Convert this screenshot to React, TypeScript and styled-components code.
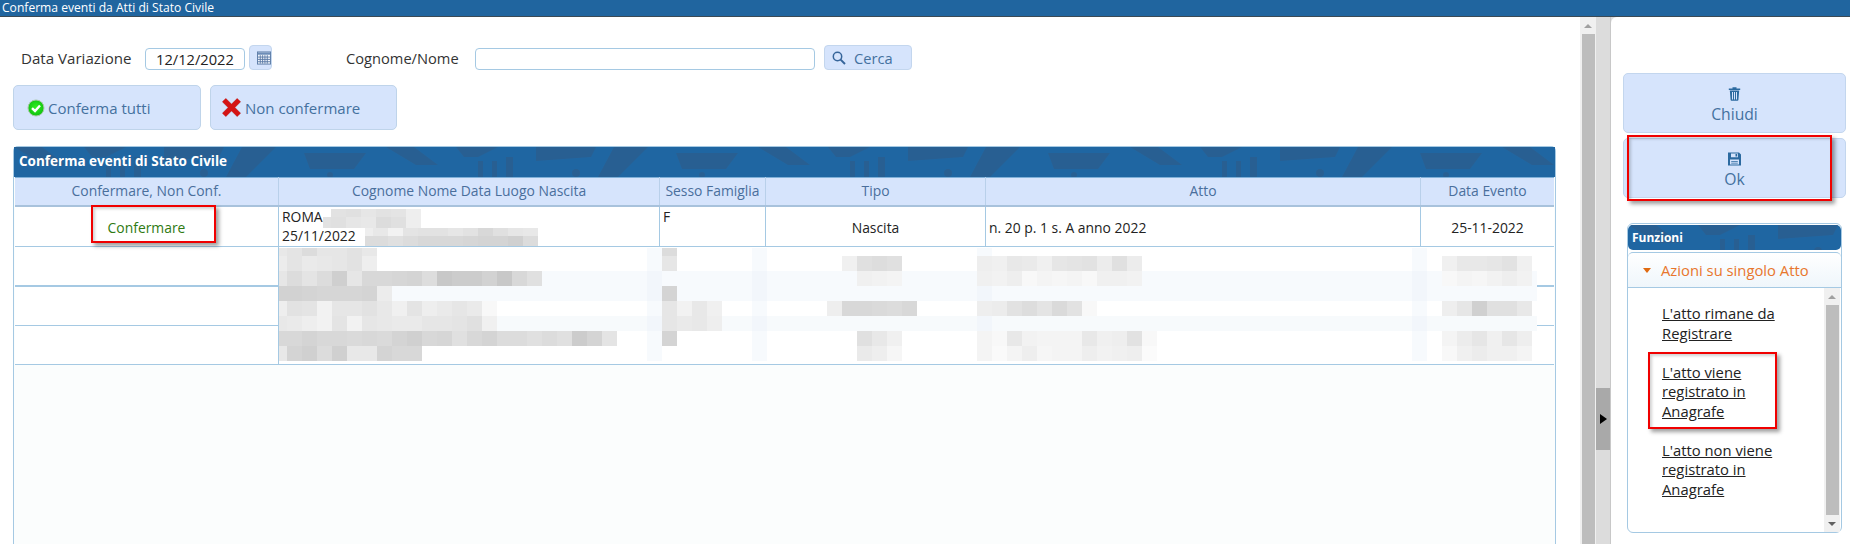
import React from 'react';
import styled, { createGlobalStyle } from 'styled-components';

const GlobalStyle = createGlobalStyle`
  html, body {
    margin: 0;
    padding: 0;
    height: 100%;
    overflow: hidden;
    background: #fff;
    font-family: 'Open Sans', 'Liberation Sans', sans-serif;
  }
  * { box-sizing: border-box; }
`;

const COLUMNS = '264px 381px 106px 220px 435px 133px';
const LINE = '#a5c9e3';

const Page = styled.div`
  width: 1850px;
  height: 544px;
  display: flex;
  flex-direction: column;
  overflow: hidden;
`;

const TitleBar = styled.div`
  height: 17px;
  flex: none;
  background: #20659f;
  border-bottom: 1px solid #3b4a55;
  color: #fff;
  font-size: 12.1px;
  line-height: 16px;
  padding-left: 2px;
`;

const Workspace = styled.div`
  flex: 1;
  min-height: 0;
  display: flex;
  background: #dcdcdc;
`;

const MainPane = styled.div`
  width: 1580px;
  flex: none;
  background: #fff;
  padding: 28px 0 0 13px;
  display: flex;
  flex-direction: column;
`;

const FilterRow = styled.div`
  height: 25px;
  display: flex;
  align-items: center;
  padding-left: 8px;
`;

const Label = styled.span<{ $width: number; $size: number }>`
  width: ${p => p.$width}px;
  flex: none;
  font-size: ${p => p.$size}px;
  color: #333;
`;

const TextInput = styled.div<{ $width: number }>`
  width: ${p => p.$width}px;
  height: 22px;
  margin-top: 3px;
  flex: none;
  border: 1px solid ${LINE};
  border-radius: 4px;
  background: #fff;
  color: #222;
  font-size: 14.67px;
  line-height: 20px;
  text-align: center;
`;

const SmallButton = styled.div<{ $width: number; $gap: number; $after: number }>`
  width: ${p => p.$width}px;
  height: 25px;
  flex: none;
  margin-left: ${p => p.$gap}px;
  margin-right: ${p => p.$after}px;
  display: flex;
  align-items: center;
  gap: 8px;
  padding-left: 7px;
  background: #d6e4fc;
  border: 1px solid #c3d6ee;
  border-radius: 4px;
  color: #44719f;
  font-size: 14.67px;
`;

const ActionRow = styled.div`
  display: flex;
  gap: 9px;
  margin-top: 15px;
`;

const ActionButton = styled.div<{ $width: number; $pad: number }>`
  width: ${p => p.$width}px;
  height: 45px;
  display: flex;
  align-items: center;
  gap: 3px;
  padding-left: ${p => p.$pad}px;
  background: #d6e4fc;
  border: 1px solid #bfd4ea;
  border-radius: 5px;
  color: #44719f;
  font-size: 15px;
`;

const TablePanel = styled.div`
  margin-top: 16px;
  width: 1543px;
  flex: 1;
  min-height: 0;
  background: #fbfdfd;
  border: 1px solid ${LINE};
  border-bottom: none;
  border-radius: 5px 5px 0 0;
`;

const TextureBar = styled.div<{ $height: number }>`
  position: relative;
  height: ${p => p.$height}px;
  background: #1f66a2;
  overflow: hidden;
`;

const TextureArt = styled.svg`
  position: absolute;
  inset: 0;
  width: 100%;
  height: 100%;
`;

const BarText = styled.span<{ $size: number; $left: number; $line: number }>`
  position: relative;
  display: block;
  padding-left: ${p => p.$left}px;
  color: #fff;
  font-size: ${p => p.$size}px;
  font-weight: 700;
  line-height: ${p => p.$line}px;
`;

const TableBody = styled.div`
  margin: 0 1px;
  width: 1539px;
  position: relative;
`;

const HeadRow = styled.div`
  display: grid;
  grid-template-columns: ${COLUMNS};
  height: 30px;
  background: #d6e4fc;
  border-bottom: 2px solid #a8c2dc;
  box-shadow: inset 0 1px 0 #7fb0d8;
`;

const HeadCell = styled.div`
  border-right: 1px solid #b9d0ea;
  color: #4a6f9c;
  font-size: 13.9px;
  line-height: 27px;
  text-align: center;
  white-space: nowrap;
  &:last-child { border-right: none; }
`;

const Row = styled.div<{ $height: number; $border: number }>`
  display: grid;
  grid-template-columns: ${COLUMNS};
  height: ${p => p.$height}px;
  background: #fff;
  border-bottom: ${p => p.$border}px solid ${LINE};
`;

const EmptyRow = styled(Row)`
  grid-template-columns: 264px 1fr;
`;

const Cell = styled.div<{ $align?: string; $middle?: boolean }>`
  position: relative;
  border-right: 1px solid ${LINE};
  padding: ${p => (p.$middle ? '2px 0 0' : '0 3px')};
  color: #222;
  font-size: 13.9px;
  line-height: 19px;
  text-align: ${p => p.$align || 'left'};
  display: ${p => (p.$middle ? 'flex' : 'block')};
  align-items: center;
  justify-content: ${p => (p.$align === 'center' ? 'center' : 'flex-start')};
  &:last-child { border-right: none; }
`;

const AttoCell = styled(Cell)`
  padding-left: 3px;
`;

const ConfirmText = styled.span`
  color: #2f7a12;
`;

const RedBox = styled.div<{ $left: number; $top: number; $width: number; $height: number }>`
  position: absolute;
  left: ${p => p.$left}px;
  top: ${p => p.$top}px;
  width: ${p => p.$width}px;
  height: ${p => p.$height}px;
  border: 2px solid #f00000;
  box-shadow: 3px 3px 4px rgba(0, 0, 0, 0.38), inset 2px 2px 3px rgba(0, 0, 0, 0.18);
  pointer-events: none;
`;

const MosaicGrid = styled.div<{ $left: number; $top: number; $columns: string; $rows: string }>`
  position: absolute;
  left: ${p => p.$left}px;
  top: ${p => p.$top}px;
  display: grid;
  grid-template-columns: ${p => p.$columns};
  grid-template-rows: ${p => p.$rows};
`;

const MosaicCell = styled.div<{ $color: string }>`
  background: ${p => p.$color};
`;

const Scrollbar = styled.div`
  width: 16px;
  flex: none;
  display: flex;
  flex-direction: column;
  align-items: center;
  background: #f0f0f0;
`;

const ScrollArrow = styled.div<{ $down?: boolean }>`
  flex: none;
  height: 17px;
  display: flex;
  align-items: center;
  justify-content: center;
  &::after {
    content: '';
    border-left: 4px solid transparent;
    border-right: 4px solid transparent;
    ${p => (p.$down ? 'border-top: 4px solid #606060;' : 'border-bottom: 4px solid #a0a0a0;')}
  }
`;

const ScrollThumb = styled.div`
  flex: 1;
  width: 13px;
  background: #bdbdbd;
`;

const Splitter = styled.div`
  width: 15px;
  flex: none;
  padding-top: 371px;
  background: #dcdcdc;
  border-right: 1px solid #c8c8c8;
`;

const SplitHandle = styled.div`
  width: 14px;
  height: 62px;
  background: #a9a9a9;
  display: flex;
  align-items: center;
  justify-content: center;
  &::after {
    content: '';
    border-top: 5px solid transparent;
    border-bottom: 5px solid transparent;
    border-left: 7px solid #000;
  }
`;

const SidePanel = styled.div`
  flex: 1;
  background: #fff;
  border-radius: 6px 0 0 0;
  padding: 56px 0 0 12px;
`;

const SideButton = styled.div`
  position: relative;
  width: 223px;
  height: 60px;
  margin-bottom: 5px;
  padding-top: 13px;
  display: flex;
  flex-direction: column;
  align-items: center;
  gap: 3px;
  background: #d6e4fc;
  border: 1px solid #c3d6ee;
  border-radius: 5px;
  color: #44719f;
  font-size: 15.7px;
  line-height: 20px;
`;

const FunctionsPanel = styled.div`
  width: 215px;
  height: 310px;
  margin: 25px 0 0 4px;
  border: 1px solid ${LINE};
  border-radius: 6px;
  padding: 1px 0 0;
  display: flex;
  flex-direction: column;
`;

const FunctionsHead = styled.div`
  flex: none;
  border-radius: 5px;
  overflow: hidden;
  margin-bottom: 2px;
`;

const AccordionHead = styled.div`
  height: 36px;
  flex: none;
  display: flex;
  align-items: center;
  gap: 10px;
  padding-left: 15px;
  background: linear-gradient(#ffffff, #eff6fb);
  border: 1px solid ${LINE};
  border-width: 1px 0;
  border-radius: 5px 5px 0 0;
  color: #e8762c;
  font-size: 14.8px;
  &::before {
    content: '';
    border-left: 4px solid transparent;
    border-right: 4px solid transparent;
    border-top: 5px solid #e06a10;
  }
`;

const AccordionBody = styled.div`
  flex: 1;
  min-height: 0;
  display: flex;
`;

const LinkList = styled.div`
  flex: 1;
  padding: 16px 0 0 34px;
  display: flex;
  flex-direction: column;
  gap: 19.5px;
`;

const LinkItem = styled.a`
  position: relative;
  display: block;
  width: 125px;
  color: #222;
  font-size: 14.8px;
  line-height: 19.5px;
  text-decoration: underline;
`;

const SideScroll = styled(Scrollbar)`
  margin-right: 1px;
`;

const TexturedBar = ({ id, height, children }: { id: string; height: number; children: React.ReactNode }) => (
  <TextureBar $height={height}>
    <TextureArt aria-hidden="true">
      <defs>
        <pattern id={id} width="372" height="31" patternUnits="userSpaceOnUse">
          <g fill="#285f92">
            <polygon points="0,0 28,0 52,18 30,18" />
            <polygon points="70,0 112,0 92,10 78,10" />
            <rect x="92" y="14" width="5" height="17" />
            <rect x="106" y="14" width="5" height="17" />
            <rect x="120" y="10" width="7" height="21" />
            <polygon points="150,0 210,0 205,10 150,14" />
            <circle cx="190" cy="26" r="4" />
            <polygon points="228,0 262,0 232,30 212,30" />
            <polygon points="290,6 352,6 340,22 296,22" />
            <circle cx="316" cy="28" r="3" />
          </g>
        </pattern>
      </defs>
      <rect width="100%" height="100%" fill={`url(#${id})`} />
    </TextureArt>
    {children}
  </TextureBar>
);

const hex = (v: string) => `#${v}${v}${v}`;

type Run = [number, string[]];
type Band = { height: number; tint?: string; runs: Run[] };

const RECORD_BANDS: Band[] = [
  { height: 8, runs: [[0, ['e8', 'e4', 'dc', 'e6', 'e6', 'e2', 'e8']], [26, ['dc']]] },
  {
    height: 15,
    runs: [
      [0, ['ec', 'e4', 'ea', 'e8', 'e6', 'e2', 'ee']],
      [26, ['e6']],
      [38, ['f0', 'e0', 'dd', 'e0']],
      [47, ['ee', 'f0', 'e8', 'ea', 'f0', 'e6', 'e4', 'e2', 'ec', 'e0', 'ec']],
      [78, ['f0', 'e8', 'e8', 'e6', 'e2', 'f0']],
    ],
  },
  {
    height: 15,
    tint: 'f7fafd',
    runs: [
      [0, ['e6', 'dc', 'e4', 'dc', 'cf', 'e6', 'd8', 'd8', 'd6', 'd4', 'dd', 'c8', 'cc', 'cc', 'd2', 'c8', 'd8', 'e0']],
      [39, ['f0', 'f2', 'f4']],
      [47, ['f0', 'f2', 'ee', 'f8', 'f4', 'f6', 'f4', 'f8', 'f0', 'f0', 'f2']],
      [78, ['f8', 'f4', 'f6', 'f2', 'ee', 'f2']],
    ],
  },
  {
    height: 15,
    tint: 'f7fafd',
    runs: [[0, ['d2', 'd2', 'd4', 'd6', 'd6', 'd6', 'd4', 'ec']], [26, ['d4']]],
  },
  {
    height: 15,
    runs: [
      [0, ['ee', 'e2', 'e4', 'f2', 'e6', 'e6', 'e2', 'e8', 'f0', 'e4', 'ee', 'ea', 'e6', 'ea', 'f8']],
      [26, ['e6', 'f2', 'e8', 'f0']],
      [37, ['ee', 'd8', 'd8', 'da', 'dc', 'd8']],
      [47, ['ee', 'ec', 'e2', 'dd', 'e4', 'da', 'e2', 'f8']],
      [78, ['ee', 'e6', 'd0', 'e0', 'e0', 'e8']],
    ],
  },
  {
    height: 15,
    tint: 'f7fafc',
    runs: [
      [0, ['e8', 'ea', 'ee', 'f2', 'e4', 'f2', 'e6', 'e8', 'ea', 'ea', 'e6', 'e6', 'e4', 'e0', 'f0']],
      [26, ['e6', 'ea', 'e8', 'ee']],
    ],
  },
  {
    height: 15,
    runs: [
      [0, ['d8', 'd8', 'd4', 'd8', 'd8', 'da', 'd8', 'da', 'd4', 'd0', 'd8', 'd6', 'e0', 'd8', 'd4', 'dc', 'dc', 'e0', 'dc', 'e0', 'cc', 'd4', 'e4']],
      [26, ['d4']],
      [39, ['e0', 'e8', 'f0']],
      [47, ['f4', 'f8', 'e8', 'f2', 'f4', 'f4', 'f4', 'e8', 'f0', 'ee', 'e2', 'f8']],
      [78, ['f4', 'ec', 'e6', 'f0', 'e6', 'ee']],
    ],
  },
  {
    height: 15,
    runs: [
      [0, ['e8', 'd4', 'd0', 'dc', 'd0', 'e8', 'e8', 'd4', 'd8', 'd8']],
      [39, ['ea', 'ee', 'f6']],
      [47, ['f4', 'fa', 'f4', 'ee', 'f6', 'f4', 'f4', 'ee', 'f2', 'f0', 'ee', 'fb']],
      [78, ['f8', 'f0', 'ec', 'f0', 'f0', 'f4']],
    ],
  },
];

const TINT_COLUMNS = [25, 32, 47, 76];
const RECORD_COLUMNS = 85;

const RecordMosaic = () => {
  const cells: React.ReactNode[] = [];
  RECORD_BANDS.forEach((band, b) => {
    for (let k = 0; k < RECORD_COLUMNS; k++) {
      let color = band.tint ? `#${band.tint}` : '#ffffff';
      if (TINT_COLUMNS.includes(k)) color = band.tint ? '#f2f6fb' : '#f7fafd';
      for (const [start, shades] of band.runs) {
        if (k >= start && k < start + shades.length) color = hex(shades[k - start]);
      }
      cells.push(<MosaicCell key={`${b}-${k}`} $color={color} />);
    }
  });
  return (
    <MosaicGrid
      $left={264}
      $top={71}
      $columns="8px repeat(83, 15px) 5px"
      $rows={RECORD_BANDS.map(b => `${b.height}px`).join(' ')}
    >
      {cells}
    </MosaicGrid>
  );
};

const SmallMosaic = ({ left, top, columns, rows, shades }: { left: number; top: number; columns: string; rows: string; shades: string[] }) => (
  <MosaicGrid $left={left} $top={top} $columns={columns} $rows={rows}>
    {shades.map((s, i) => (
      <MosaicCell key={i} $color={hex(s)} />
    ))}
  </MosaicGrid>
);

const CheckIcon = () => (
  <svg width="18" height="18" viewBox="0 0 18 18">
    <defs>
      <radialGradient id="okGreen" cx="50%" cy="45%" r="55%">
        <stop offset="0%" stopColor="#30f020" />
        <stop offset="100%" stopColor="#10c010" />
      </radialGradient>
    </defs>
    <circle cx="9" cy="9" r="8" fill="url(#okGreen)" stroke="#a8c8a8" strokeWidth="1" />
    <path d="M5 9.2 L8 12 L13 6.5" fill="none" stroke="#fff" strokeWidth="2.4" />
  </svg>
);

const CrossIcon = () => (
  <svg width="21" height="21" viewBox="0 0 21 21">
    <path d="M3 3 L18 18 M18 3 L3 18" stroke="#8c8c8c" strokeWidth="6" opacity="0.35" />
    <path d="M3 3 L18 18 M18 3 L3 18" stroke="#d41414" strokeWidth="5" />
  </svg>
);

const CalendarIcon = () => (
  <svg width="15" height="14" viewBox="0 0 15 14">
    <rect x="0.5" y="0.5" width="14" height="13" fill="#f2f6fc" stroke="#5b7ba6" />
    <rect x="1" y="1" width="13" height="2.5" fill="#6d8db8" />
    <path d="M1 6 H14 M1 8.5 H14 M1 11 H14 M3.5 4 V13 M6 4 V13 M8.5 4 V13 M11 4 V13" stroke="#5b7ba6" strokeWidth="1" />
  </svg>
);

const SearchIcon = () => (
  <svg width="14" height="14" viewBox="0 0 14 14" fill="none" stroke="#36659a">
    <circle cx="5.5" cy="5.5" r="4.2" strokeWidth="1.5" />
    <path d="M8.6 8.6 L13 13" strokeWidth="2" />
  </svg>
);

const TrashIcon = () => (
  <svg width="13" height="14" viewBox="0 0 13 14" fill="#2c6aa0">
    <path d="M4.5 1.5 H8.5 V0.3 H4.5 Z M0.8 1.6 H12.2 V3 H0.8 Z" />
    <path d="M1.8 3.6 H11.2 L10.4 13 Q10.3 13.8 9.5 13.8 H3.5 Q2.7 13.8 2.6 13 Z M4 5 V12.4 H5 V5 Z M6 5 V12.4 H7 V5 Z M8 5 V12.4 H9 V5 Z" fillRule="evenodd" />
  </svg>
);

const SaveIcon = () => (
  <svg width="13" height="14" viewBox="0 0 13 14" fill="#2c6aa0">
    <path d="M0 0.5 H11 L13 2.5 V13.5 H0 Z M3 1.5 V5.2 H10 V1.5 Z M2 7.5 V12.5 H11 V7.5 Z M7.5 2 H9.2 V4.6 H7.5 Z" fillRule="evenodd" />
    <path d="M3.2 9 H9.8 V9.8 H3.2 Z M3.2 10.8 H9.8 V11.6 H3.2 Z" />
  </svg>
);

export default function App() {
  return (
    <Page>
      <GlobalStyle />
      <TitleBar>Conferma eventi da Atti di Stato Civile</TitleBar>
      <Workspace>
        <MainPane>
          <FilterRow>
            <Label $width={124} $size={15.1}>Data Variazione</Label>
            <TextInput $width={100}>12/12/2022</TextInput>
            <SmallButton $width={23} $gap={4} $after={74}>
              <CalendarIcon />
            </SmallButton>
            <Label $width={129} $size={14.67}>Cognome/Nome</Label>
            <TextInput $width={340} />
            <SmallButton $width={88} $gap={9} $after={0}>
              <SearchIcon />
              Cerca
            </SmallButton>
          </FilterRow>
          <ActionRow>
            <ActionButton $width={188} $pad={13}>
              <CheckIcon />
              Conferma tutti
            </ActionButton>
            <ActionButton $width={187} $pad={10}>
              <CrossIcon />
              Non confermare
            </ActionButton>
          </ActionRow>
          <TablePanel>
            <TexturedBar id="tableTexture" height={30}>
              <BarText $size={13.5} $left={5} $line={29}>Conferma eventi di Stato Civile</BarText>
            </TexturedBar>
            <TableBody>
              <HeadRow>
                <HeadCell>Confermare, Non Conf.</HeadCell>
                <HeadCell>Cognome Nome Data Luogo Nascita</HeadCell>
                <HeadCell>Sesso Famiglia</HeadCell>
                <HeadCell>Tipo</HeadCell>
                <HeadCell>Atto</HeadCell>
                <HeadCell>Data Evento</HeadCell>
              </HeadRow>
              <Row $height={40} $border={1}>
                <Cell $align="center" $middle>
                  <ConfirmText>Confermare</ConfirmText>
                  <RedBox $left={76} $top={-2} $width={125} $height={38} />
                </Cell>
                <Cell>
                  ROMA
                  <br />
                  25/11/2022
                  <SmallMosaic
                    left={44}
                    top={2}
                    columns="8px repeat(6, 15px)"
                    rows="8px 11px"
                    shades={['ff', 'e2', 'e0', 'e6', 'e2', 'e4', 'ee', 'e2', 'e0', 'e6', 'e8', 'dc', 'e0', 'ee']}
                  />
                  <SmallMosaic
                    left={86}
                    top={21}
                    columns="8px repeat(11, 15px)"
                    rows="8px 10px"
                    shades={[
                      'ee', 'e8', 'f2', 'e4', 'e2', 'e2', 'e6', 'e2', 'd8', 'e0', 'e6', 'e8',
                      'dc', 'dc', 'e0', 'dc', 'd8', 'd8', 'd8', 'd6', 'd4', 'd4', 'd0', 'dc',
                    ]}
                  />
                </Cell>
                <Cell>F</Cell>
                <Cell $align="center" $middle>Nascita</Cell>
                <AttoCell $middle>n. 20 p. 1 s. A anno 2022</AttoCell>
                <Cell $align="center" $middle>25-11-2022</Cell>
              </Row>
              <EmptyRow $height={40} $border={2}>
                <Cell />
                <Cell />
              </EmptyRow>
              <EmptyRow $height={39} $border={1}>
                <Cell />
                <Cell />
              </EmptyRow>
              <EmptyRow $height={39} $border={1}>
                <Cell />
                <Cell />
              </EmptyRow>
              <RecordMosaic />
            </TableBody>
          </TablePanel>
        </MainPane>
        <Scrollbar>
          <ScrollArrow />
          <ScrollThumb />
        </Scrollbar>
        <Splitter>
          <SplitHandle />
        </Splitter>
        <SidePanel>
          <SideButton>
            <TrashIcon />
            Chiudi
          </SideButton>
          <SideButton>
            <SaveIcon />
            Ok
            <RedBox $left={3} $top={-4} $width={205} $height={66} />
          </SideButton>
          <FunctionsPanel>
            <FunctionsHead>
              <TexturedBar id="funcTexture" height={25}>
                <BarText $size={12} $left={4} $line={25}>Funzioni</BarText>
              </TexturedBar>
            </FunctionsHead>
            <AccordionHead>Azioni su singolo Atto</AccordionHead>
            <AccordionBody>
              <LinkList>
                <LinkItem>L'atto rimane da Registrare</LinkItem>
                <LinkItem>
                  L'atto viene registrato in Anagrafe
                  <RedBox $left={-14} $top={-11} $width={129} $height={77} />
                </LinkItem>
                <LinkItem>L'atto non viene registrato in Anagrafe</LinkItem>
              </LinkList>
              <SideScroll>
                <ScrollArrow />
                <ScrollThumb />
                <ScrollArrow $down />
              </SideScroll>
            </AccordionBody>
          </FunctionsPanel>
        </SidePanel>
      </Workspace>
    </Page>
  );
}
